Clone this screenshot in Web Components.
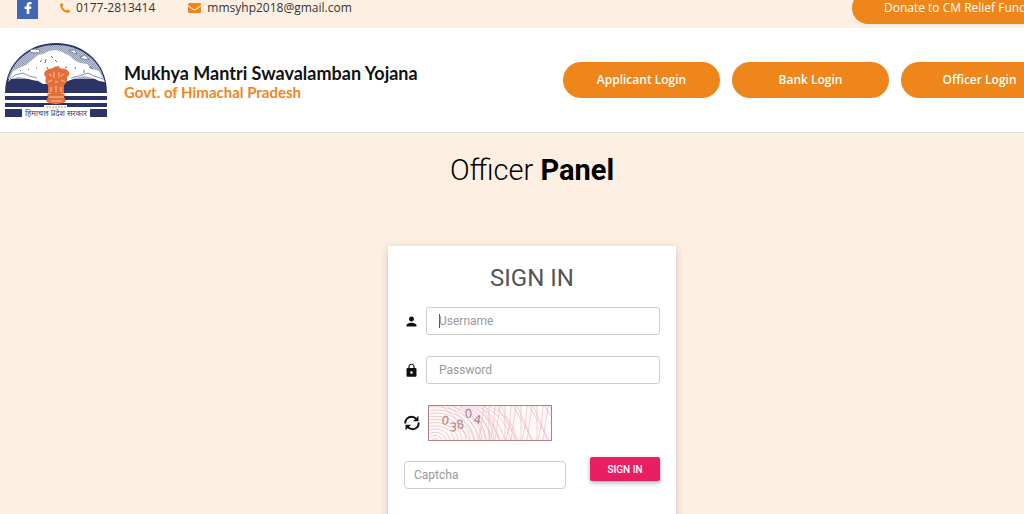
<!DOCTYPE html>
<html lang="en">
<head>
<meta charset="utf-8">
<title>Mukhya Mantri Swavalamban Yojana</title>
<style>
:root {
  --orange: #ee861c;
  --cream: #fdf0e3;
  --pink: #e91e63;
  --border: #ccc;
}
html, body { height: 100%; }
body {
  margin: 0;
  overflow: hidden;
  background: var(--cream);
  font-family: Roboto, "Liberation Sans", sans-serif;
}
</style>
</head>
<body>
<portal-page>
  <top-bar slot="top"></top-bar>
  <site-header slot="header">
    <pill-link href="#applicant">Applicant Login</pill-link>
    <pill-link href="#bank">Bank Login</pill-link>
    <pill-link href="#officer">Officer Login</pill-link>
  </site-header>
  <officer-panel>
    <sign-in-card></sign-in-card>
  </officer-panel>
</portal-page>

<script>
function define(name, html, setup) {
  const tpl = document.createElement('template');
  tpl.innerHTML = html;
  customElements.define(name, class extends HTMLElement {
    constructor() {
      super();
      this.attachShadow({ mode: 'open' });
      this.shadowRoot.appendChild(tpl.content.cloneNode(true));
    }
    connectedCallback() {
      if (setup) setup(this, this.shadowRoot);
    }
  });
}

// The page is a little wider than its window and starts scrolled past the top edge
define('portal-page', `
<style>
:host {
  display: flex;
  flex-direction: column;
  width: calc(100% + 40px);
  margin-top: -12px;
}
</style>
<slot name="top"></slot>
<slot name="header"></slot>
<main><slot></slot></main>
`);

define('top-bar', `
<style>
:host {
  display: flex;
  align-items: center;
  height: 40px;
  padding-left: 17px;
  font: 12px/20px "Open Sans", sans-serif;
  color: #333;
}
a { color: inherit; text-decoration: none; display: flex; align-items: center; }
.fb {
  width: 21px;
  height: 22px;
  justify-content: center;
  background: #4267b2;
  margin-right: 22px;
}
.phone { gap: 6px; margin-right: 33px; }
.mail { gap: 6px; }
.donate {
  margin-left: auto;
  box-sizing: border-box;
  width: 212px;
  height: 32px;
  padding-left: 32px;
  border-radius: 16px;
  background: var(--orange);
  color: #fff;
  white-space: nowrap;
}
svg { display: block; }
</style>
<a class="fb" href="#facebook" aria-label="Facebook">
  <svg width="8" height="12" viewBox="0 0 8 12"><path fill="#fff" d="M7.5.1v2.2H6.3c-.8 0-1 .4-1 1v1.3h2.1L7.1 7H5.3v5H2.7V7H.6V4.600h2.100V2.900C2.700 1 4 0 5.700 0z"/></svg>
</a>
<a class="phone" href="tel:01772813414">
  <svg width="10" height="10" viewBox="0 0 10 10"><path fill="#ee861c" d="M10 7.900c0 .8-.4 1.400-1 1.700-.8.500-1.800.4-2.800 0C3.300 8.400 1.500 6.600.400 3.900 0 2.900 0 1.800.500 1 .900.300 1.500 0 2.100 0c.3 0 .8 1 1.200 2 .2.600-1 1.100-1 1.600 0 .8 2.900 3.800 4 4 .6.100 1-1.100 1.500-1C8.900 7 10 7.500 10 7.900z"/></svg>
  0177-2813414
</a>
<a class="mail" href="mailto:mmsyhp2018@gmail.com">
  <svg width="13" height="10" viewBox="0 0 13 10"><path fill="#ee861c" d="M0 1.200C0 .5.500 0 1.200 0h10.600c.7 0 1.200.5 1.200 1.200 0 .8-.6 1.500-1.200 1.900L7.900 5.700c-.9.700-1.900.7-2.800 0L1.200 3.100C.6 2.700 0 2 0 1.200zM0 3.300c1.400 1.200 3 2.200 4.500 3.300 1.300.9 2.700.9 4 0C10 5.500 11.600 4.500 13 3.300v5.500c0 .7-.5 1.200-1.200 1.200H1.200C.5 10 0 9.500 0 8.800z"/></svg>
  mmsyhp2018@gmail.com
</a>
<a class="donate" href="#donate">Donate to CM Relief Fund</a>
`);

define('state-emblem', `
<style>
:host { display: block; }
svg { display: block; }
text { font: 8px "Noto Sans", "Noto Sans Devanagari", sans-serif; }
</style>
<svg width="102" height="75" viewBox="0 0 102 75" role="img" aria-label="Himachal Pradesh">
  <defs>
    <pattern id="dots" width="2" height="2" patternUnits="userSpaceOnUse">
      <rect width="2" height="2" fill="#bcc2d0"/>
      <rect width="1" height="1" fill="#939cb3"/>
      <rect x="1" y="1" width="1" height="1" fill="#939cb3"/>
    </pattern>
  </defs>
  <path d="M0 50C0 20 23 0 51 0s51 20 51 50z" fill="#2c3465"/>
  <path d="M3 36C9 15 28 2 51 2s42 13 48 34z" fill="url(#dots)"/>
  <path d="M3 39l5-11 6-3 7-3 6-5 6-5 5-1 6-3 6-1 5 1 4 2 6 3 4 4 6 3 7 1 5 5 7 2 6 11-6-1-6-3-9-2-8 2-8 3-7 3H38l-5-3-6-1-7-2-7-1-7 2z" fill="#fff"/>
  <path d="M5 36l5-4 8-2 6 3 8 2M98 36l-9-3-6-3-9 3-8 2" fill="none" stroke="#8b91a9"/>
  <path d="M35 19l2-2M40 20l1-4M46 13l2 2M50 17l2 2M31 25h1M42 24l1 2M23 26l1 1M60 25l2-1M71 24l-1 2M15 27l1 1M79 27v3M53 23l1 1M84 24l4 2" stroke="#626a90"/>
  <g fill="#fff" stroke="#777f9e">
    <ellipse cx="30" cy="8" rx="5" ry="2"/>
    <path d="M64 7l6 0 2 4-4-1zM75 14l5-2 4 5-6-1z"/>
  </g>
  <path d="M0 50h102v3H0zM0 57h102v3H0zM0 64h102v2H0z" fill="#fff"/>
  <path d="M0 53h102v4H0zM0 60h102v4H0zM0 66h102v8H0z" fill="#2c3465"/>
  <path d="M17 66h68v9H17zM39 62h23v5H39z" fill="#fff"/>
  <path d="M41 64h20" stroke="#e18a60" stroke-dasharray="2 1"/>
  <g fill="#e56f3a">
    <path d="M41 34c-3-2-2-6 1-7 2-2 5-1 6-2 1-2 6-2 7 0 2 1 5 0 7 2 3 2 3 5 0 7 1 3-1 7-3 8v4H43v-4c-3-2-3-5-2-8z"/>
    <path d="M43 43h16v7H43z"/>
    <path d="M42 51c6-2 12-2 18 0l-1 3 2 4c-3 4-17 4-20 0l2-4z"/>
  </g>
  <path d="M44 31l3 2M56 33l3-2M49 29v6M54 29v6M43 39l4-2M56 37l4 2M50 39h3M46 44v5M51 43v6M56 44v5M44 54h15M46 58h11" stroke="#f9c5a0"/>
  <text x="51" y="73" text-anchor="middle" fill="#3d4270">हिमाचल प्रदेश सरकार</text>
</svg>
`);

define('site-header', `
<style>
:host {
  display: flex;
  align-items: center;
  justify-content: space-between;
  height: 104px;
  padding: 0 6px 0 5px;
  background: #fff;
  border-bottom: 1px solid #cfe6d8;
  font-family: Lato, sans-serif;
}
.brand { display: flex; align-items: center; gap: 17px; }
h1 { margin: 0; font-size: 18px; line-height: 20px; color: #111; }
p { margin: 0; font-size: 15px; line-height: 18px; font-weight: 700; color: var(--orange); }
.names { padding-top: 4px; }
nav { display: flex; gap: 12px; }
</style>
<div class="brand">
  <state-emblem></state-emblem>
  <div class="names">
    <h1>Mukhya Mantri Swavalamban Yojana</h1>
    <p>Govt. of Himachal Pradesh</p>
  </div>
</div>
<nav><slot></slot></nav>
`);

define('pill-link', `
<style>
:host { display: block; }
a {
  display: block;
  width: 157px;
  border-radius: 18px;
  background: var(--orange);
  color: #fff;
  font: 600 12px/36px "Open Sans", sans-serif;
  text-align: center;
  text-decoration: none;
}
</style>
<a><slot></slot></a>
`, (host, root) => {
  root.querySelector('a').href = host.getAttribute('href');
});

define('officer-panel', `
<style>
:host {
  display: flex;
  flex-direction: column;
  align-items: center;
  padding-top: 19px;
}
h2 {
  margin: 0 0 58px;
  font-size: 29px;
  line-height: 36px;
  font-weight: 400;
  color: #000;
}
.light { font-weight: 300; }
b { font-weight: 700; }
</style>
<h2><span class="light">Officer</span> <b>Panel</b></h2>
<slot></slot>
`);

define('form-field', `
<style>
:host { display: flex; align-items: center; margin-bottom: 21px; }
label { width: 22px; flex: none; }
svg { display: block; }
input {
  flex: 1;
  min-width: 0;
  box-sizing: border-box;
  height: 28px;
  padding: 0 12px;
  border: 1px solid var(--border);
  border-radius: 3px;
  background: #fff;
  font: 12px Roboto, sans-serif;
  color: #555;
  outline: none;
}
input::placeholder { color: #999; }
/* text cursor of the field that has the focus */
:host([active]) input {
  caret-color: transparent;
  background: linear-gradient(#555, #555) 12px center / 1px 14px no-repeat #fff;
}
</style>
<label for="box">
  <svg width="15" height="15" viewBox="0 0 24 24"><path fill="#111"/></svg>
</label>
<input id="box">
`, (host, root) => {
  const icons = {
    person: 'M12 12c2.210 0 4-1.790 4-4s-1.790-4-4-4-4 1.790-4 4 1.790 4 4 4zm0 2c-2.670 0-8 1.340-8 4v2h16v-2c0-2.660-5.330-4-8-4z',
    lock: 'M18 8h-1V6c0-2.760-2.240-5-5-5S7 3.240 7 6v2H6c-1.100 0-2 .9-2 2v10c0 1.100.9 2 2 2h12c1.100 0 2-.9 2-2V10c0-1.100-.9-2-2-2zm-6 9c-1.100 0-2-.9-2-2s.9-2 2-2 2 .9 2 2-.9 2-2 2zm3.100-9H8.900V6c0-1.710 1.390-3.100 3.100-3.100s3.100 1.390 3.100 3.100z',
  };
  const input = root.querySelector('input');
  root.querySelector('path').setAttribute('d', icons[host.getAttribute('icon')]);
  root.querySelector('label').setAttribute('aria-label', host.getAttribute('label'));
  input.placeholder = host.getAttribute('label');
  input.type = host.getAttribute('type') || 'text';
});

define('captcha-image', `
<style>
:host { display: block; box-sizing: border-box; border: 1px solid #b08087; background: #fffafa; }
svg { display: block; }
text { font: 12px "DejaVu Sans", sans-serif; fill: #a98088; }
path { fill: none; stroke: #edb9c3; stroke-width: .7; }
</style>
<svg width="122" height="34" viewBox="0 0 122 34">
  <path/>
  <text x="12 20 28 36 44" y="18 25 23 12 17" rotate="8 5 -8 -5 10">03804</text>
</svg>
`, (host, root) => {
  let d = '';
  // rings round the lower left corner
  for (let r = 3; r < 62; r += 4) {
    d += `M${6 - r} 35A${r} ${r * 0.8} 0 0 1 ${6 + r} 35`;
  }
  // fan that spreads down and to the right
  for (let i = 2; i < 11; i++) {
    d += `M${i * 6} 0Q${14 + i * 7} 10 ${28 + i * 6} 34`;
  }
  // crossing strands
  for (let x = 52; x < 122; x += 16) {
    d += `M${x} 0Q${x + 10} 16 ${x + 20} 34M${x + 4} 0Q${x + 12} 14 ${x + 18} 34`;
    d += `M${x + 3} 0L${x - 2} 34M${x + 8} 0V34M${x + 14} 0Q${x + 14} 18 ${x + 9} 34`;
  }
  root.querySelector('path').setAttribute('d', d);
});

define('sign-in-card', `
<style>
:host {
  display: block;
  box-sizing: border-box;
  width: 288px;
  padding: 16px 16px 32px;
  background: #fff;
  box-shadow: 0 2px 8px rgba(0, 0, 0, .2);
}
h3 {
  margin: 0 0 13px;
  font-size: 24px;
  line-height: 32px;
  font-weight: 400;
  text-align: center;
  color: #555;
}
.row { display: flex; align-items: center; gap: 8px; margin-bottom: 16px; }
.reload { width: 16px; height: 16px; padding: 0; border: 0; background: none; }
.reload svg { display: block; }
.end { display: flex; align-items: flex-start; justify-content: space-between; }
.end input {
  box-sizing: border-box;
  width: 162px;
  height: 28px;
  margin: 4px 0 0;
  padding: 0 9px;
  border: 1px solid var(--border);
  border-radius: 4px;
  font: 12px Roboto, sans-serif;
}
.end input::placeholder { color: #999; }
.submit {
  width: 70px;
  height: 24px;
  padding: 0;
  border: 0;
  border-radius: 2px;
  background: var(--pink);
  color: #fff;
  font: 500 10px Roboto, sans-serif;
  box-shadow: 0 2px 5px rgba(0, 0, 0, .3);
}
</style>
<form>
  <h3>SIGN IN</h3>
  <form-field icon="person" label="Username" active></form-field>
  <form-field icon="lock" label="Password" type="password"></form-field>
  <div class="row">
    <button class="reload" type="button" aria-label="Reload captcha">
      <svg width="16" height="16" viewBox="0 0 16 16">
        <path d="M1.300 8.500C1 4.500 4 1.800 7.500 1.800c2.200 0 3.800.9 5 2.500M14.700 7.500c.3 4-2.700 6.700-6.200 6.700-2.200 0-3.800-.9-5-2.500" fill="none" stroke="#111" stroke-width="2"/>
        <path d="M14.500.800v5.500H9zM1.500 15.200V9.700H7z" fill="#111"/>
      </svg>
    </button>
    <captcha-image></captcha-image>
  </div>
  <div class="end">
    <input type="text" placeholder="Captcha" aria-label="Captcha">
    <button class="submit" type="submit">SIGN IN</button>
  </div>
</form>
`);
</script>
</body>
</html>
